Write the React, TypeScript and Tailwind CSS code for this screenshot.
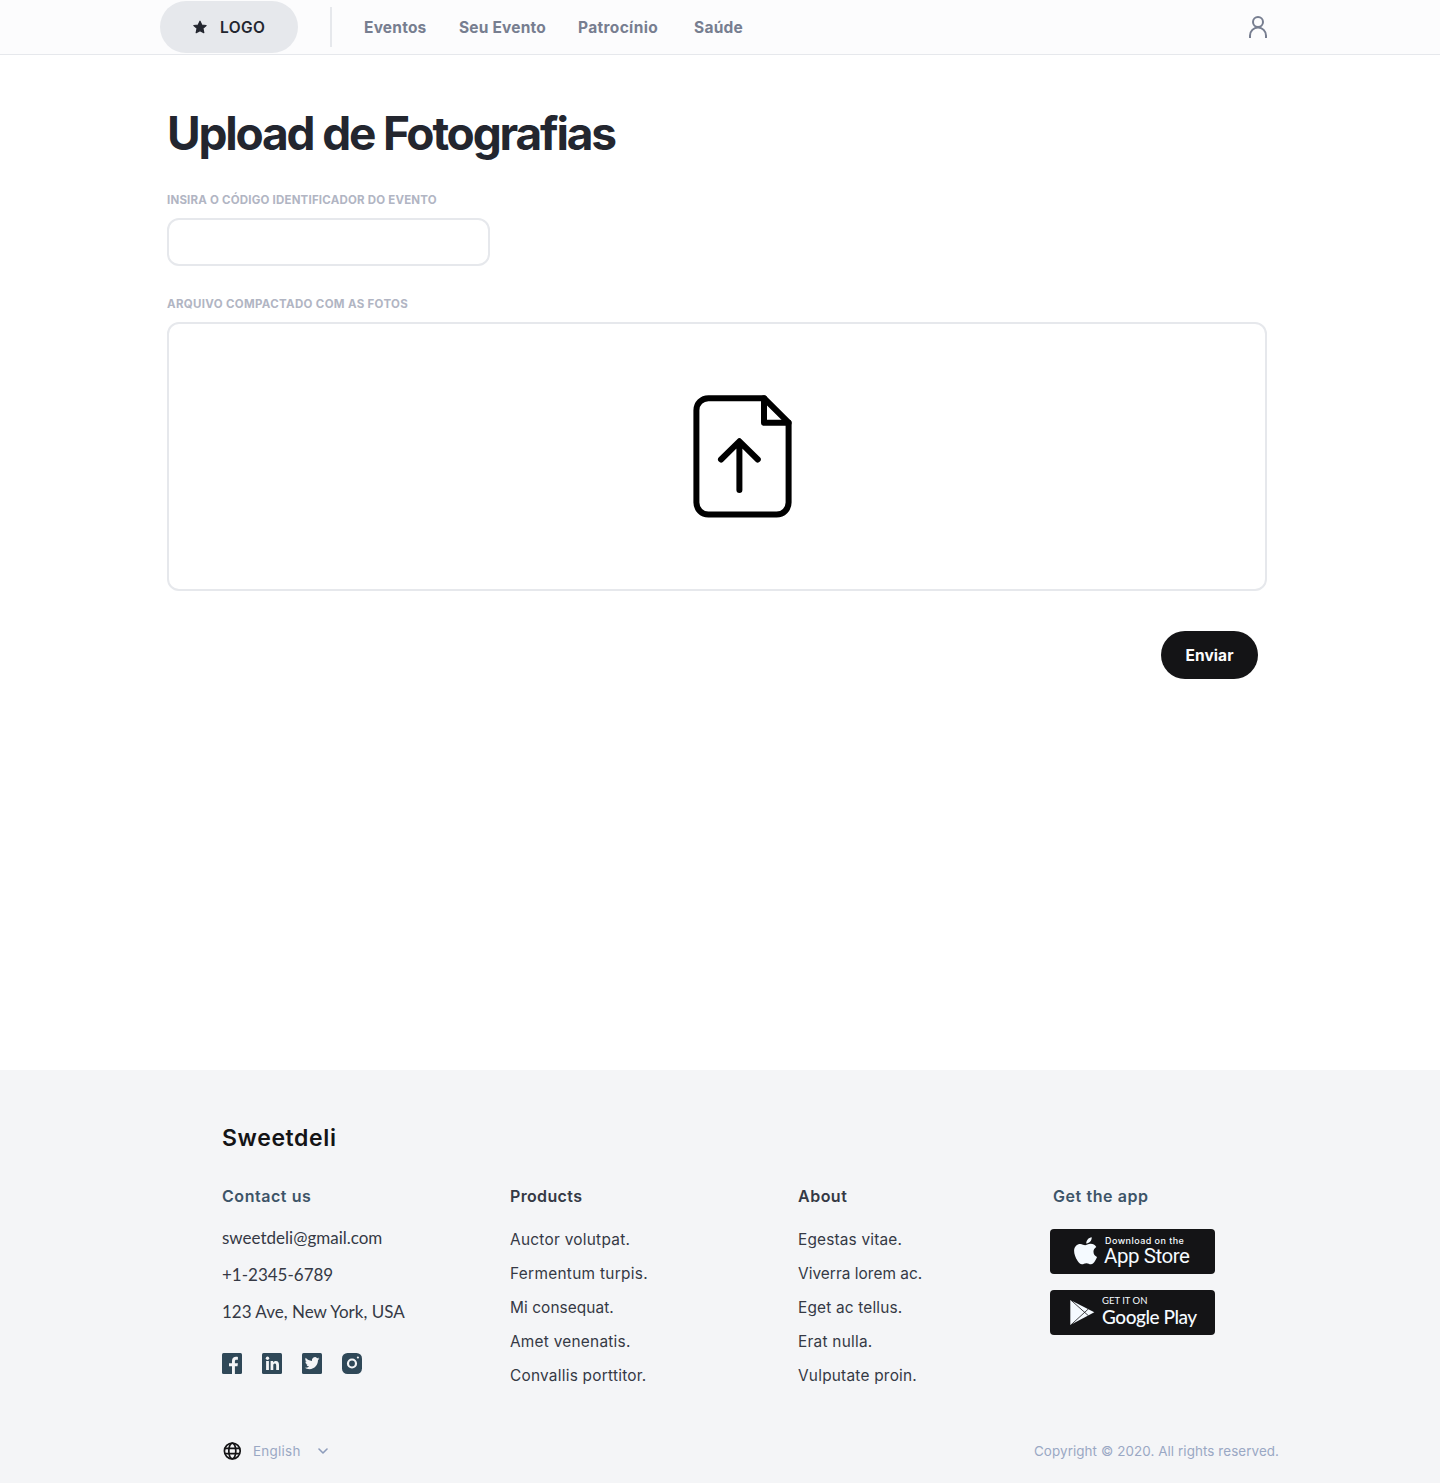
const navItems = [
  { label: "Eventos", cls: "w-[95px] tracking-[0.21px]" },
  { label: "Seu Evento", cls: "w-[119px] tracking-[0.2px]" },
  { label: "Patrocínio", cls: "w-[116px] tracking-[0.34px]" },
  { label: "Saúde", cls: "w-[60px] tracking-[0.24px]" },
];

const products = [
  { label: "Auctor volutpat.", cls: "tracking-[0.27px]" },
  { label: "Fermentum turpis.", cls: "tracking-[0.3px]" },
  { label: "Mi consequat.", cls: "tracking-[0.08px]" },
  { label: "Amet venenatis.", cls: "tracking-[0.25px]" },
  { label: "Convallis porttitor.", cls: "tracking-[0.24px]" },
];

const about = [
  { label: "Egestas vitae.", cls: "tracking-[0.18px]" },
  { label: "Viverra lorem ac.", cls: "tracking-[0.04px]" },
  { label: "Eget ac tellus.", cls: "tracking-[0.18px]" },
  { label: "Erat nulla.", cls: "tracking-[0.25px]" },
  { label: "Vulputate proin.", cls: "tracking-[0.23px]" },
];

function StarIcon() {
  return (
    <svg width="16" height="16" viewBox="0 0 16 16" fill="#23262f" stroke="#23262f" strokeWidth="1.2" strokeLinejoin="round">
      <path d="M8 2.2l1.8 3.8 4.300.5-3.200 2.900.9 4.200L8 11.600 4.200 13.600l.9-4.200L1.900 6.500 6.200 6z" />
    </svg>
  );
}

function UserIcon() {
  return (
    <svg width="20" height="24" viewBox="0 0 20 24" fill="none" stroke="#777e90" strokeWidth="2">
      <circle cx="10" cy="7" r="5" />
      <path d="M2 23v-2.500a8 8 0 0 1 16 0V23" />
    </svg>
  );
}

function UploadFileIcon() {
  return (
    <svg width="100" height="124" viewBox="0 0 100 124" fill="none" stroke="#000" strokeWidth="6" strokeLinecap="round" strokeLinejoin="round">
      <path d="M71 4.200H15.400a12 12 0 0 0-12 12v92.400a12 12 0 0 0 12 12h68.200a12 12 0 0 0 12-12V28.700z" />
      <path d="M71 4.200v24.500h24.600" />
      <path d="M46.400 96V47.500M28 65.500l18.400-18.200L64.800 65.500" />
    </svg>
  );
}

function Facebook() {
  return (
    <svg width="20" height="21" viewBox="0 0 20 21">
      <rect width="20" height="21" rx="1.500" fill="#2f4858" />
      <path fill="#f4f5f7" d="M10 21v-7.700H7V10.200h3V8c0-2.800 1.700-4.200 4.100-4.200.8 0 1.400.05 1.800.1v2.800h-1.500c-1.100 0-1.500.6-1.500 1.500v2h3l-.4 3.100h-2.600V21z" />
    </svg>
  );
}

function Linkedin() {
  return (
    <svg width="20" height="21" viewBox="0 0 20 21">
      <rect width="20" height="21" rx="1.500" fill="#2f4858" />
      <g fill="#f4f5f7">
        <circle cx="5.500" cy="5.200" r="1.700" />
        <path d="M4.100 8.100h2.800v8.900H4.100zM8.600 8.100h2.600v1.300c.5-.9 1.400-1.500 2.700-1.500 2.500 0 3.100 1.700 3.100 4.100V17h-2.800v-4.300c0-1.100-.1-2.300-1.400-2.300-1.200 0-1.500 1-1.500 2.200V17H8.600z" />
      </g>
    </svg>
  );
}

function Twitter() {
  return (
    <svg width="20" height="21" viewBox="0 0 20 21">
      <rect width="20" height="21" rx="1.500" fill="#2f4858" />
      <path fill="#f4f5f7" transform="translate(2.700 2.800) scale(.615)" d="M23.950 4.570a10 10 0 0 1-2.820.77 4.960 4.960 0 0 0 2.160-2.720c-.95.560-2 .96-3.130 1.180a4.920 4.920 0 0 0-8.380 4.480C7.690 8.100 4.070 6.130 1.640 3.160a4.820 4.820 0 0 0-.67 2.480c0 1.710.87 3.210 2.190 4.100a4.900 4.900 0 0 1-2.230-.62v.06a4.920 4.920 0 0 0 3.950 4.830 5 5 0 0 1-2.210.08 4.940 4.940 0 0 0 4.600 3.420A9.870 9.870 0 0 1 0 19.540a13.990 13.990 0 0 0 7.550 2.210c9.050 0 14-7.500 14-13.980 0-.21 0-.42-.02-.63a9.940 9.940 0 0 0 2.460-2.550z" />
    </svg>
  );
}

function Instagram() {
  return (
    <svg width="20" height="21" viewBox="0 0 20 21">
      <rect width="20" height="21" rx="5.500" fill="#2f4858" />
      <circle cx="10" cy="10.500" r="4" fill="none" stroke="#f4f5f7" strokeWidth="2.200" />
      <circle cx="15.900" cy="4.500" r="1.100" fill="#f4f5f7" />
    </svg>
  );
}

function GlobeIcon() {
  return (
    <svg width="20" height="20" viewBox="0 0 20 20" fill="none" stroke="#141416" strokeWidth="1.700">
      <circle cx="10.300" cy="10" r="7.900" />
      <ellipse cx="10.300" cy="10" rx="3.500" ry="7.900" />
      <path d="M3.100 7.400h14.400M3.100 12.600h14.400" />
    </svg>
  );
}

function AppleLogo() {
  return (
    <svg width="24" height="29" viewBox="0 0 24 29" fill="#f5faff">
      <path transform="translate(-1.300 .3) scale(1.180)" d="M16.100 0c.1 1.300-.4 2.600-1.200 3.600-.9 1-2.100 1.700-3.400 1.600-.1-1.300.5-2.600 1.200-3.400C13.500.8 14.900.1 16.100 0zM20 8.200c-1.500.9-2.400 2.300-2.400 4.100 0 2 1.200 3.700 3 4.400-.4 1.200-1 2.300-1.700 3.300-.9 1.300-1.900 2.900-3.500 2.900-1.500 0-2-.9-3.800-.9s-2.300.9-3.800.9c-1.500 0-2.600-1.400-3.600-2.800C2.200 17.200 1 13.600 1.200 10.900c.2-3.100 2.500-5.300 5.200-5.300 1.700 0 3.100 1.100 4.100 1.100s2.800-1.300 4.800-1.200c1.900.1 3.600.9 4.700 2.700z" />
    </svg>
  );
}

function PlayLogo() {
  return (
    <svg width="26" height="28" viewBox="0 0 26 28">
      <path d="M.3 1L24.300 13.300.3 26z" fill="#f5faff" />
      <path d="M.8 1L18.500 16.800M.8 26L18.500 9.800" fill="none" stroke="#141416" strokeWidth=".8" />
    </svg>
  );
}

export default function App() {
  return (
    <div className="flex h-[1483px] w-[1440px] flex-col bg-white font-['Inter',sans-serif] whitespace-nowrap">
      <header className="h-[55px] shrink-0 border-b border-[#e6e8ec] bg-[#fcfcfd]">
        <div className="flex h-[54px] items-center pl-40 text-[15.5px]">
          <a className="flex h-[52px] w-[138px] items-center rounded-full bg-[#e6e8ec] pl-8 font-semibold text-[#23262f]">
            <StarIcon />
            <span className="ml-3 pt-px tracking-[0.4px]">LOGO</span>
          </a>
          <div className="ml-8 h-10 w-0.5 bg-[#e6e8ec]" />
          <nav className="ml-8 flex pt-px font-bold text-[#777e90]">
            {navItems.map((item) => (
              <a key={item.label} className={item.cls}>{item.label}</a>
            ))}
          </nav>
          <div className="ml-[494px]"><UserIcon /></div>
        </div>
      </header>

      <main className="flex h-[1015px] shrink-0 flex-col pl-[167px]">
        <h1 className="mt-[50px] h-14 text-[46px] leading-14 font-bold tracking-[-2.18px] text-[#23262f]">Upload de Fotografias</h1>
        <label className="mt-[29px] h-5 text-[11.5px] leading-5 font-bold tracking-[0.2px] text-[#b1b5c3]">INSIRA O CÓDIGO IDENTIFICADOR DO EVENTO</label>
        <input className="mt-2 h-12 w-[323px] rounded-xl border-2 border-[#e6e8ec]" />
        <label className="mt-7 h-5 text-[11.5px] leading-5 font-bold tracking-[0.32px] text-[#b1b5c3]">ARQUIVO COMPACTADO COM AS FOTOS</label>
        <div className="mt-2 h-[269px] w-[1100px] rounded-xl border-2 border-[#e6e8ec] pt-[70px] pl-[524px]">
          <UploadFileIcon />
        </div>
        <button className="mt-10 ml-[994px] h-12 w-[97px] rounded-full bg-[#141416] pt-px text-[15.5px] font-bold tracking-[0.1px] text-[#fcfcfd]">Enviar</button>
      </main>

      <footer className="h-[413px] bg-[#f4f5f7] pt-[52px] pl-[222px]">
        <div className="h-8 text-[23px] leading-8 font-semibold tracking-[0.62px] text-[#141416]">Sweetdeli</div>
        <div className="mt-[30px] flex h-[211px]">
          <section className="w-72">
            <h2 className="h-6 text-[16px] leading-6 font-semibold tracking-[0.55px] text-[#3d5468]">Contact us</h2>
            <div className="mt-[11px] font-['Lato'] text-[17px] leading-[37px] text-[#353945]">
              <p>sweetdeli@gmail.com</p>
              <p>+1-2345-6789</p>
              <p>123 Ave, New York, USA</p>
            </div>
            <div className="mt-[23px] flex gap-5">
              <Facebook />
              <Linkedin />
              <Twitter />
              <Instagram />
            </div>
          </section>
          <section className="w-72 text-[#353945]">
            <h2 className="h-6 text-[16px] leading-6 font-semibold tracking-[0.35px]">Products</h2>
            <ul className="mt-[15px] text-[15.4px] leading-[34px]">
              {products.map((p) => <li key={p.label} className={p.cls}>{p.label}</li>)}
            </ul>
          </section>
          <section className="w-[252px] text-[#353945]">
            <h2 className="h-6 text-[16px] leading-6 font-semibold tracking-[0.5px]">About</h2>
            <ul className="mt-[15px] text-[15.4px] leading-[34px]">
              {about.map((p) => <li key={p.label} className={p.cls}>{p.label}</li>)}
            </ul>
          </section>
          <section className="w-[165px]">
            <h2 className="ml-[3px] h-6 text-[16px] leading-6 font-semibold tracking-[0.58px] text-[#3d5468]">Get the app</h2>
            <a className="mt-[21px] flex h-[45px] rounded bg-[#141416] pt-2 pl-6 text-[#f5faff]">
              <AppleLogo />
              <span className="ml-1.5 flex flex-col">
                <span className="h-2 pl-px text-[9px] leading-2 font-medium tracking-[0.45px]">Download on the</span>
                <span className="mt-px h-5 font-['Roboto'] text-[20.5px] leading-5 tracking-[-0.45px]">App Store</span>
              </span>
            </a>
            <a className="mt-4 flex h-[45px] rounded bg-[#141416] pt-[7px] pl-5 text-[#f5faff]">
              <span className="pt-0.5"><PlayLogo /></span>
              <span className="ml-1.5 flex flex-col">
                <span className="h-2 font-['Lato'] text-[9.5px] leading-2">GET IT ON</span>
                <span className="mt-0.5 h-5 font-['Lato'] text-[19px] leading-5 font-medium tracking-[-0.45px]">Google Play</span>
              </span>
            </a>
          </section>
        </div>
        <div className="mt-[46px] flex h-5 items-center text-[13.4px] leading-5 text-[#9aa8c4]">
          <GlobeIcon />
          <span className="ml-[11px] w-[65px] tracking-[0.28px]">English</span>
          <svg width="10" height="6" viewBox="0 0 10 6" fill="none" stroke="#8d9cbb" strokeWidth="1.600" strokeLinecap="round" strokeLinejoin="round">
            <path d="M1 1l4 4 4-4" />
          </svg>
          <span className="ml-[706px] tracking-[0.09px]">Copyright © 2020. All rights reserved.</span>
        </div>
      </footer>
    </div>
  );
}
